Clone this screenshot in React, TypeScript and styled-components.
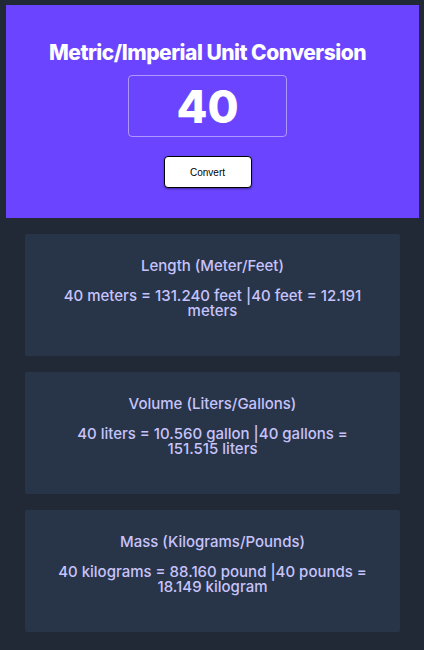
import React, { useState } from "react";
import styled, { createGlobalStyle } from "styled-components";

const Global = createGlobalStyle`
  html, body { margin: 0; padding: 0; background: #212936; }
  body { font-family: Inter, "Noto Sans", sans-serif; }
`;

const Page = styled.div`
  display: flex;
  flex-direction: column;
  align-items: center;
  padding: 5px 5px 18px 6px;
  gap: 16px;
`;

const Header = styled.header`
  align-self: stretch;
  height: 213px;
  box-sizing: border-box;
  background: #6b44ff;
  display: flex;
  flex-direction: column;
  align-items: center;
  padding: 35px 10px 0 0;
`;

const Title = styled.h1`
  margin: 0;
  color: #fff;
  font-size: 21px;
  font-weight: 800;
  letter-spacing: -0.5px;
  line-height: 26px;
`;

const Input = styled.input`
  margin-top: 9px;
  width: 159px;
  height: 62px;
  box-sizing: border-box;
  background: transparent;
  border: 1px solid rgba(255, 255, 255, 0.45);
  border-radius: 4px;
  color: #fff;
  text-align: center;
  font-family: Inter, sans-serif;
  font-size: 45px;
  font-weight: 800;
  outline: none;
`;

const Button = styled.button`
  margin-top: 19px;
  width: 88px;
  height: 32px;
  background: #fff;
  border: 1px solid #000;
  border-radius: 4px;
  font-family: "Liberation Sans", Arial, sans-serif;
  font-size: 10px;
  color: #000;
  box-shadow: 0 1px 2px rgba(0,0,0,0.4);
`;

const Card = styled.section`
  width: 375px;
  height: 122px;
  box-sizing: border-box;
  background: #283548;
  border-radius: 2px;
  padding: 23px 30px 0;
  text-align: center;
  color: #c7c3fc;
`;

const CardTitle = styled.h2`
  margin: 0;
  font-size: 15px;
  font-weight: 500;
  line-height: 18px;
`;

const CardBody = styled.p`
  margin: 13px 0 0;
  font-size: 15px;
  font-weight: 500;
  line-height: 15px;
`;

const fmt = (n: number) => n.toFixed(3);

export default function App() {
  const [value, setValue] = useState("40");
  const n = Number(value) || 0;
  const cards = [
    {
      title: "Length (Meter/Feet)",
      body: `${value} meters = ${fmt(n * 3.281)} feet |${value} feet = ${fmt(n / 3.281)} meters`,
    },
    {
      title: "Volume (Liters/Gallons)",
      body: `${value} liters = ${fmt(n * 0.264)} gallon |${value} gallons = ${fmt(n / 0.264)} liters`,
    },
    {
      title: "Mass (Kilograms/Pounds)",
      body: `${value} kilograms = ${fmt(n * 2.204)} pound |${value} pounds = ${fmt(n / 2.204)} kilogram`,
    },
  ];
  return (
    <>
      <Global />
      <Page>
        <Header>
          <Title>Metric/Imperial Unit Conversion</Title>
          <Input value={value} onChange={(e) => setValue(e.target.value)} />
          <Button>Convert</Button>
        </Header>
        {cards.map((c) => (
          <Card key={c.title}>
            <CardTitle>{c.title}</CardTitle>
            <CardBody>{c.body}</CardBody>
          </Card>
        ))}
      </Page>
    </>
  );
}
